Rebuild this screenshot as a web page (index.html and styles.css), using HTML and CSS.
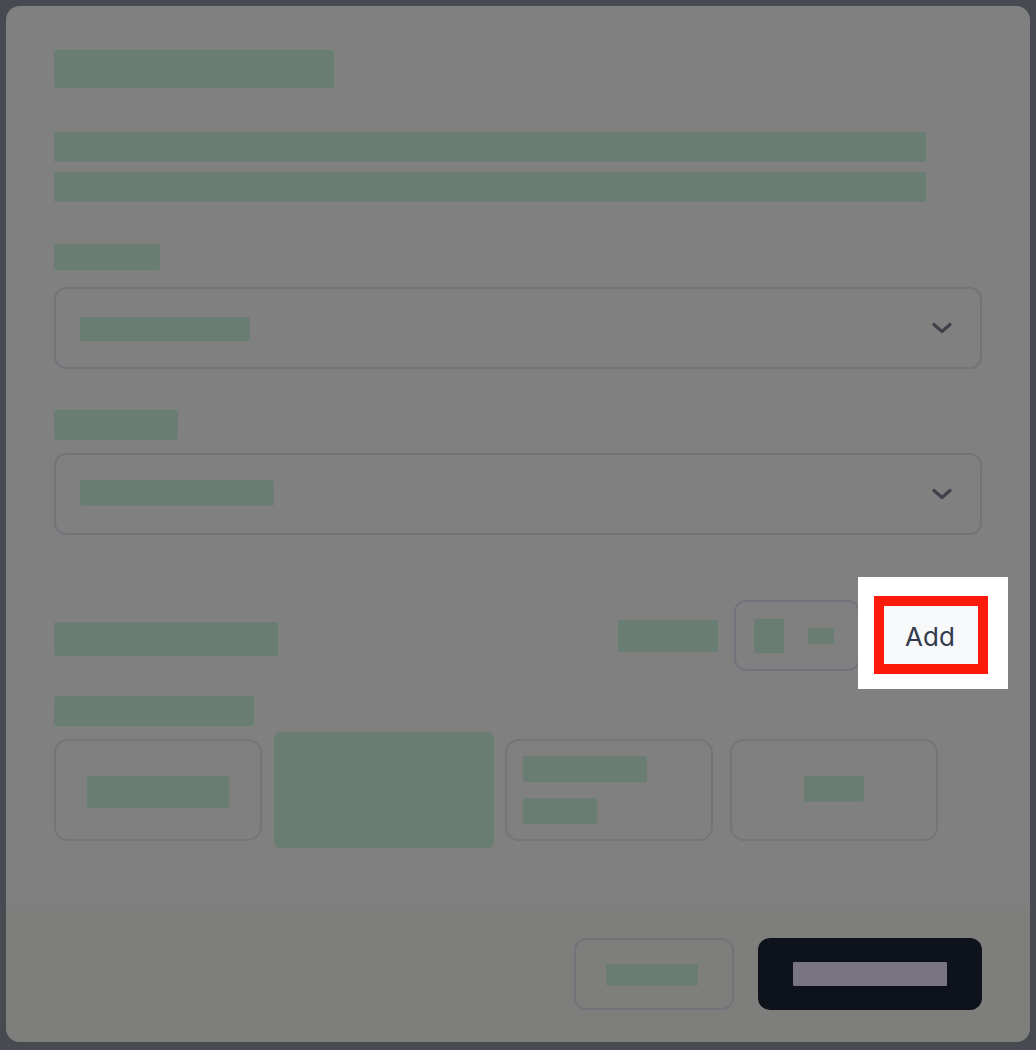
FILE: index.html
```html
<!DOCTYPE html>
<html lang="en">
<head>
<meta charset="utf-8">
<title>Dialog</title>
<link rel="stylesheet" href="styles.css">
</head>
<body>
<div class="modal">
  <div class="modal-body">
    <div class="ph title"></div>
    <div class="desc">
      <div class="ph desc-line"></div>
      <div class="ph desc-line"></div>
    </div>

    <div class="ph label label-1"></div>
    <div class="select">
      <div class="ph select-value sv-1"></div>
      <svg class="chevron" width="22" height="12" viewBox="0 0 22 12"><path d="M3 2.5 L11 9.5 L19 2.5" fill="none" stroke="#3e4149" stroke-width="3.2" stroke-linecap="round" stroke-linejoin="round"/></svg>
    </div>

    <div class="ph label label-2"></div>
    <div class="select select-2">
      <div class="ph select-value sv-2"></div>
      <svg class="chevron" width="22" height="12" viewBox="0 0 22 12"><path d="M3 2.5 L11 9.5 L19 2.5" fill="none" stroke="#3e4149" stroke-width="3.2" stroke-linecap="round" stroke-linejoin="round"/></svg>
    </div>

    <div class="row">
      <div class="ph row-title"></div>
      <div class="row-right">
        <div class="ph row-hint"></div>
        <div class="toggle">
          <div class="ph toggle-a"></div>
          <div class="ph toggle-b"></div>
        </div>
        <div class="highlight">
          <button class="add-btn">Add</button>
        </div>
      </div>
    </div>

    <div class="ph label label-3"></div>
    <div class="cards">
      <div class="card card-center"><div class="ph c1"></div></div>
      <div class="card card-filled"></div>
      <div class="card card-left">
        <div class="ph c3a"></div>
        <div class="ph c3b"></div>
      </div>
      <div class="card card-center"><div class="ph c4"></div></div>
    </div>
  </div>
  <div class="modal-footer">
    <div class="btn btn-cancel"><div class="ph cancel-ph"></div></div>
    <div class="btn btn-primary"><div class="primary-ph"></div></div>
  </div>
</div>
</body>
</html>
```

FILE: styles.css
```css
* { box-sizing: border-box; }
html, body { margin: 0; padding: 0; }
body {
  width: 1036px;
  height: 1050px;
  background: #474a50;
  overflow: hidden;
  font-family: "Inter", "Liberation Sans", sans-serif;
}
.modal {
  margin: 6px;
  width: 1024px;
  height: 1036px;
  background: #808080;
  border-radius: 14px;
  overflow: hidden;
  display: flex;
  flex-direction: column;
}
.modal-body {
  height: 900px;
  padding: 44px 48px 0 48px;
}
.ph { background: #697d72; border-radius: 2px; }
.title { width: 280px; height: 38px; }
.desc { margin-top: 44px; display: flex; flex-direction: column; gap: 10px; }
.desc-line { width: 872px; height: 30px; }

.label-1 { margin-top: 42px; width: 106px; height: 26px; }
.label-2 { margin-top: 41px; width: 124px; height: 30px; }
.select {
  margin-top: 17px;
  height: 82px;
  width: 928px;
  border: 2px solid #737379;
  border-radius: 12px;
  display: flex;
  align-items: center;
  justify-content: space-between;
  padding: 0 27px 0 24px;
}
.select-2 { margin-top: 13px; }
.sv-1 { width: 170px; height: 24px; margin-top: 2px; }
.sv-2 { width: 194px; height: 26px; margin-top: -2px; }
.chevron { display: block; }

.row {
  margin-top: 42px;
  height: 112px;
  display: flex;
  align-items: center;
  justify-content: space-between;
}
.row-title { width: 224px; height: 34px; margin-top: 12px; }
.row-right { display: flex; align-items: center; margin-right: -26px; }
.row-hint { width: 100px; height: 32px; margin-top: 6px; }
.toggle {
  margin-left: 16px;
  margin-top: 5px;
  width: 126px;
  height: 71px;
  border: 2px solid #72737b;
  border-radius: 12px;
  display: flex;
  align-items: center;
  padding-left: 18px;
  gap: 24px;
}
.toggle-a { width: 30px; height: 34px; border-radius: 1px; }
.toggle-b { width: 26px; height: 16px; border-radius: 1px; }
.highlight {
  margin-left: -2px;
  width: 150px;
  height: 112px;
  background: #ffffff;
  padding: 19px 20px 15px 16px;
}
.add-btn {
  display: flex;
  align-items: center;
  justify-content: center;
  width: 114px;
  height: 78px;
  border: 10px solid #fc1a0a;
  background: #f7f8fa;
  color: #333b4c;
  font-family: "Inter", "Liberation Sans", sans-serif;
  font-size: 26px;
  font-weight: 400;
  padding: 2px 2px 0 0;
  margin: 0;
}

.label-3 { margin-top: 7px; width: 200px; height: 30px; }
.cards {
  margin-top: 13px;
  display: grid;
  grid-template-columns: repeat(4, 208px);
  column-gap: 17.4px;
}
.card {
  height: 102px;
  border: 2px solid #757575;
  border-radius: 14px;
}
.card-center { display: flex; align-items: center; justify-content: center; }
.card-filled {
  border: none;
  background: #697d72;
  border-radius: 6px;
  margin: -7px -7px -7px -5px;
  height: 116px;
}
.card-left {
  display: flex;
  flex-direction: column;
  align-items: flex-start;
  padding: 15px 16px;
  gap: 16px;
}
.c1 { width: 142px; height: 32px; margin-top: 4px; }
.c3a { width: 124px; height: 26px; }
.c3b { width: 74px; height: 26px; }
.c4 { width: 60px; height: 26px; margin-top: -2px; }

.modal-footer {
  height: 136px;
  background: #7e7f7d;
  display: flex;
  justify-content: flex-end;
  align-items: flex-start;
  gap: 24px;
  padding: 32px 48px 0 48px;
}
.btn {
  height: 72px;
  border-radius: 12px;
  display: flex;
  align-items: center;
  justify-content: center;
}
.btn-cancel { width: 160px; border: 2px solid #737379; }
.cancel-ph { width: 92px; height: 22px; margin-top: 2px; margin-right: 4px; }
.btn-primary { width: 224px; background: #0e131b; }
.primary-ph { width: 154px; height: 24px; background: #787581; border-radius: 1px; }
```
